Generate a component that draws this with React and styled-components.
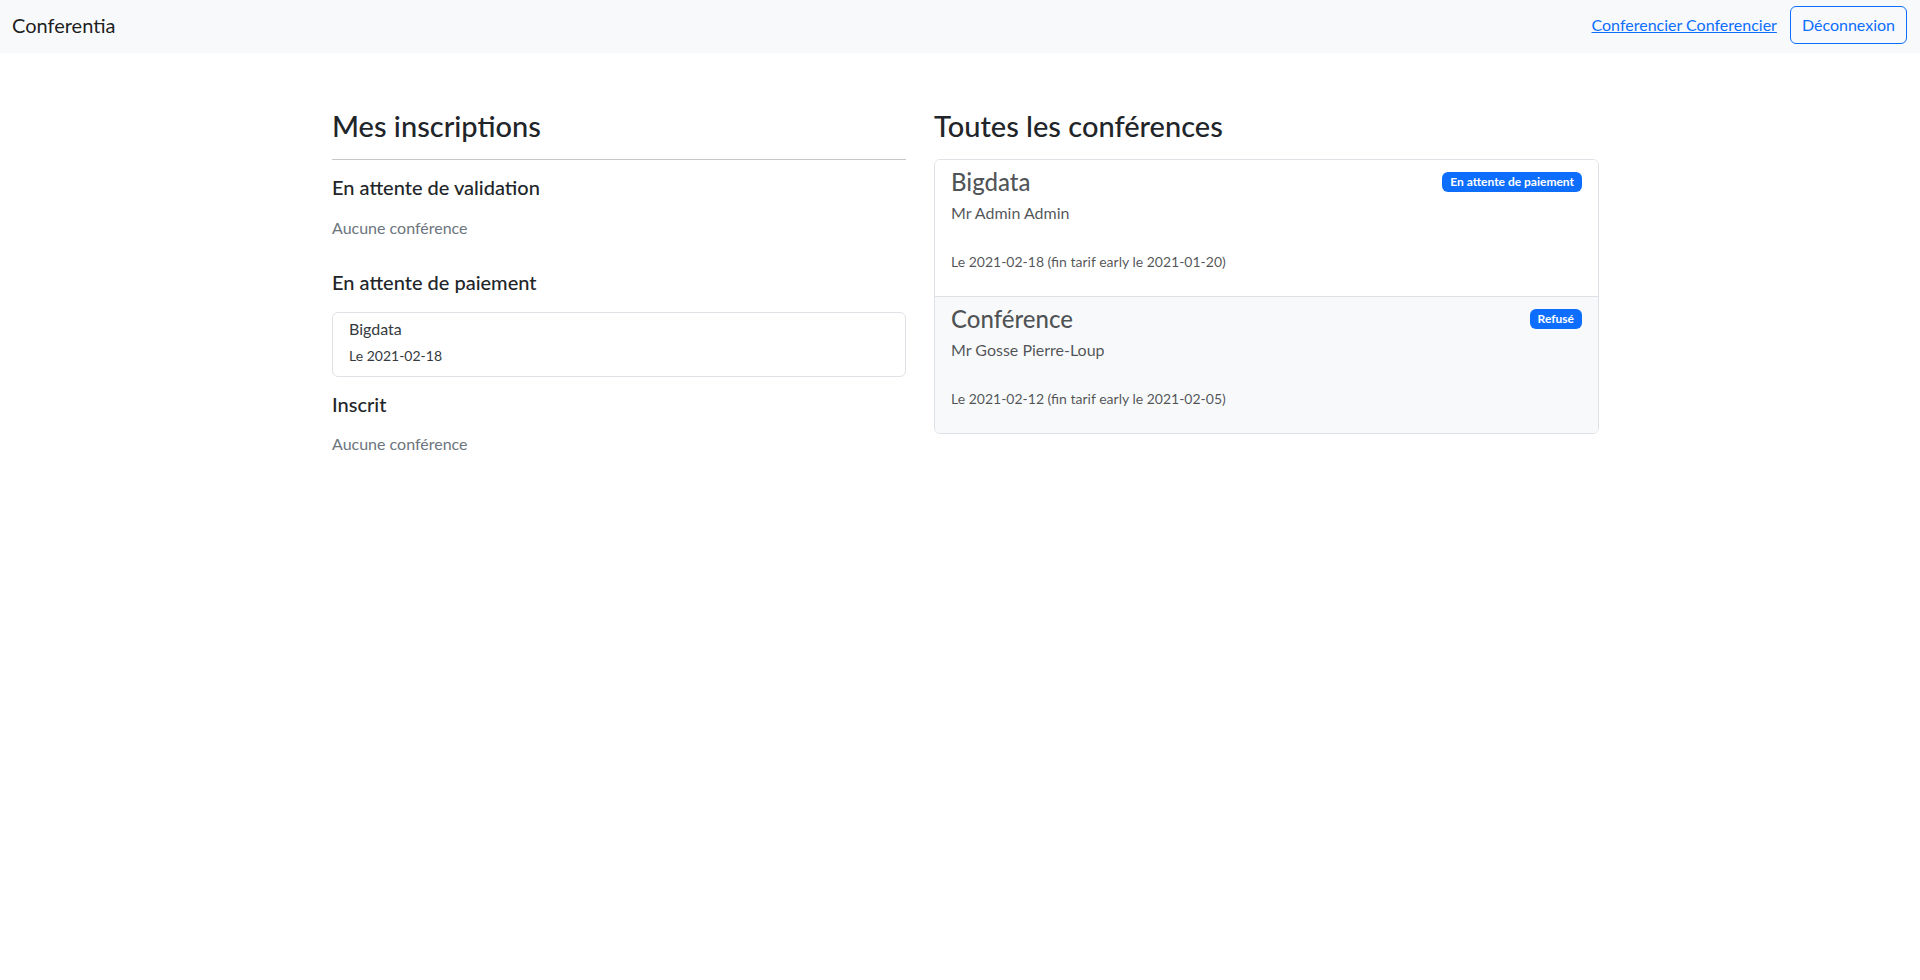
import React from "react";
import styled, { createGlobalStyle } from "styled-components";

const GlobalStyle = createGlobalStyle`
  *, *::before, *::after { box-sizing: border-box; }
  html, body { margin: 0; padding: 0; background: #fff; }
  body {
    font-family: Lato, "Noto Sans", "DejaVu Sans", sans-serif;
    font-size: 16px;
    line-height: 1.5;
    color: #212529;
  }
`;

const Navbar = styled.nav`
  height: 53px;
  background: #f8f9fa;
  display: flex;
  align-items: center;
  justify-content: space-between;
  padding: 0 13px 4px 12px;
`;

const Brand = styled.a`
  font-size: 20px;
  line-height: 30px;
  color: rgba(0, 0, 0, 0.9);
  text-decoration: none;
`;

const NavRight = styled.div`
  display: flex;
  align-items: center;
  gap: 13px;
`;

const UserLink = styled.a`
  color: #0d6efd;
  text-decoration: underline;
  font-size: 16px;
`;

const OutlineButton = styled.button`
  font-family: inherit;
  font-size: 16px;
  line-height: 24px;
  padding: 6px 11px;
  color: #0d6efd;
  background: transparent;
  border: 1px solid #0d6efd;
  border-radius: 6px;
  cursor: pointer;
`;

const Container = styled.main`
  max-width: 1320px;
  margin: 0 auto;
  padding: 54px 21px 0 32px;
  display: grid;
  grid-template-columns: 574px 665px;
  column-gap: 28px;
  align-items: start;
`;

const Column = styled.section`
  display: flex;
  flex-direction: column;
`;

const PageTitle = styled.h2`
  margin: 0 0 14px;
  font-size: 29px;
  font-weight: 500;
  line-height: 38px;
  color: #212529;
`;

const Rule = styled.hr`
  margin: 0 0 15px;
  border: 0;
  border-top: 1px solid rgba(0, 0, 0, 0.22);
`;

const SectionTitle = styled.h4`
  margin: 0 0 ${(p) => p.$mb || 18}px;
  font-size: 20px;
  font-weight: 500;
  line-height: 1.2;
  color: #212529;
`;

const EmptyText = styled.p`
  margin: 0 0 30px;
  color: #6c757d;
  font-size: 16px;
  line-height: 24px;
`;

const SmallCard = styled.div`
  border: 1px solid #dee2e6;
  border-radius: 6px;
  padding: 4px 16px 10px;
  margin-bottom: 15px;
  color: #343a40;
`;

const SmallCardTitle = styled.div`
  font-size: 16px;
  line-height: 24px;
  margin-bottom: 4px;
`;

const SmallText = styled.div`
  font-size: 14px;
  line-height: 21px;
`;

const ListGroup = styled.div`
  border: 1px solid #dee2e6;
  border-radius: 6px;
  overflow: hidden;
`;

const ListItem = styled.div`
  padding: 8px 16px 8px;
  color: rgba(33, 37, 41, 0.78);
  background: ${(p) => (p.$active ? "#f8f9fa" : "#fff")};
  & + & {
    border-top: 1px solid #dee2e6;
  }
`;

const ItemHeader = styled.div`
  display: flex;
  align-items: center;
  justify-content: space-between;
  margin-bottom: 4px;
`;

const ItemTitle = styled.h4`
  margin: 0;
  font-size: 24px;
  font-weight: 500;
  line-height: 1.2;
  color: inherit;
`;

const Speaker = styled.p`
  margin: 0 0 26px;
  font-size: 16px;
  line-height: 24px;
`;

const DateLine = styled.p`
  margin: 0 0 16px;
  font-size: 14px;
  line-height: 21px;
`;

const Badge = styled.span`
  display: inline-block;
  background: #0d6efd;
  color: #fff;
  font-size: 12px;
  font-weight: 700;
  line-height: 1;
  padding: 4px 8px;
  border-radius: 6px;
  white-space: nowrap;
`;

const conferences = [
  {
    title: "Bigdata",
    speaker: "Mr Admin Admin",
    date: "Le 2021-02-18 (fin tarif early le 2021-01-20)",
    status: "En attente de paiement",
  },
  {
    title: "Conférence",
    speaker: "Mr Gosse Pierre-Loup",
    date: "Le 2021-02-12 (fin tarif early le 2021-02-05)",
    status: "Refusé",
    active: true,
  },
];

export default function App() {
  return (
    <>
      <GlobalStyle />
      <Navbar>
        <Brand href="#">Conferentia</Brand>
        <NavRight>
          <UserLink href="#">Conferencier Conferencier</UserLink>
          <OutlineButton>Déconnexion</OutlineButton>
        </NavRight>
      </Navbar>
      <Container>
        <Column>
          <PageTitle>Mes inscriptions</PageTitle>
          <Rule />
          <SectionTitle $mb={17}>En attente de validation</SectionTitle>
          <EmptyText>Aucune conférence</EmptyText>
          <SectionTitle>En attente de paiement</SectionTitle>
          <SmallCard>
            <SmallCardTitle>Bigdata</SmallCardTitle>
            <SmallText>Le 2021-02-18</SmallText>
          </SmallCard>
          <SectionTitle $mb={16}>Inscrit</SectionTitle>
          <EmptyText>Aucune conférence</EmptyText>
        </Column>
        <Column>
          <PageTitle>Toutes les conférences</PageTitle>
          <ListGroup>
            {conferences.map((c) => (
              <ListItem key={c.title} $active={c.active}>
                <ItemHeader>
                  <ItemTitle>{c.title}</ItemTitle>
                  <Badge>{c.status}</Badge>
                </ItemHeader>
                <Speaker>{c.speaker}</Speaker>
                <DateLine>{c.date}</DateLine>
              </ListItem>
            ))}
          </ListGroup>
        </Column>
      </Container>
    </>
  );
}
